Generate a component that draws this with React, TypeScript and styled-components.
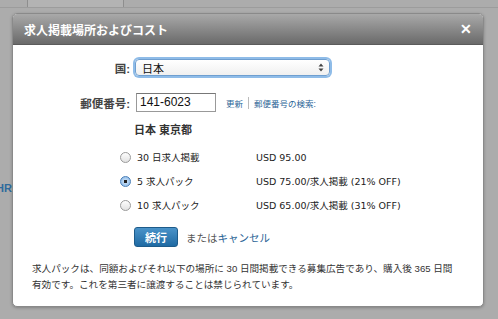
import React from 'react'
import styled, { createGlobalStyle } from 'styled-components'

const Global = createGlobalStyle`
  html, body { margin: 0; padding: 0; }
  * { box-sizing: border-box; }
  body {
    width: 498px;
    height: 319px;
    overflow: hidden;
    background: #acacac;
    font-family: "Liberation Sans", "Noto Sans CJK JP", sans-serif;
    color: #333;
  }
`

const Page = styled.div`
  position: relative;
  width: 498px;
  height: 319px;
  overflow: hidden;
`

const TabStrip = styled.div`
  height: 8px;
  border-bottom: 1px solid #9c9c9c;
  display: flex;
  padding-left: 27px;
`

const Tab = styled.div`
  width: 97px;
  height: 7px;
  border: 1px solid #8e8e8e;
  border-top: none;
  border-bottom: none;
  background: #b3b3b3;
`

const Behind = styled.div`
  position: absolute;
  left: 0;
  top: 182px;
  width: 12px;
  overflow: hidden;
  direction: rtl;
  font-size: 11px;
  font-weight: bold;
  color: #2e6a9c;
  line-height: 12px;
`

const Modal = styled.div`
  position: absolute;
  left: 12px;
  top: 13px;
  width: 472px;
  background: #fff;
  border: 1px solid #8a8a8a;
  border-radius: 5px;
  box-shadow: 0 1px 3px rgba(0, 0, 0, 0.25);
  overflow: hidden;
`

const Header = styled.div`
  height: 31px;
  background: linear-gradient(#a9a9a9, #6a6a6a);
  border-bottom: 1px solid #5b5b5b;
  display: flex;
  align-items: center;
  justify-content: space-between;
  padding: 0 11px 0 11px;
  color: #fff;
  font-weight: bold;
  font-size: 12px;
`

const Close = styled.span`
  font-size: 14px;
  line-height: 1;
`

const Body = styled.div`
  padding: 14px 18px 13px 18px;
`

const Row = styled.div<{ gap?: number }>`
  display: grid;
  grid-template-columns: 99px auto;
  column-gap: 5px;
  align-items: center;
  margin-bottom: ${p => p.gap ?? 0}px;
`

const Label = styled.label`
  text-align: right;
  font-size: 11.5px;
  font-weight: bold;
  color: #444;
`

const Select = styled.div`
  width: 195px;
  height: 17px;
  border: 1px solid #6f9fd0;
  border-radius: 4px;
  box-shadow: 0 0 0 2px #8fbce8;
  background: linear-gradient(#fff, #f0f0f0);
  display: flex;
  align-items: center;
  justify-content: space-between;
  padding: 0 5px 0 6px;
  font-size: 11px;
  color: #111;
`

const Postal = styled.div`
  display: flex;
  align-items: center;
`

const Input = styled.div`
  width: 80px;
  height: 19px;
  border: 1px solid #999;
  border-top-color: #777;
  padding-left: 3px;
  font-size: 12px;
  line-height: 17px;
  color: #111;
  margin-left: 1px;
`

const SmallLink = styled.a<{ offset?: number }>`
  font-size: 8.5px;
  color: #2a6496;
  text-decoration: none;
  margin-left: ${p => p.offset ?? 0}px;
`

const Sep = styled.span`
  width: 1px;
  height: 12px;
  background: #bbb;
  margin: 0 5px;
`

const Options = styled.div`
  margin-left: 89px;
  margin-top: 9px;
`

const Place = styled.div`
  font-size: 11px;
  font-weight: bold;
  color: #333;
  margin-left: 14px;
  margin-bottom: 8px;
`

const Option = styled.div`
  display: grid;
  grid-template-columns: 17px 119px auto;
  align-items: center;
  height: 24px;
  font-family: "DejaVu Sans", "Noto Sans CJK JP", sans-serif;
  font-size: 9.5px;
  color: #222;
`

const Radio = styled.span<{ checked?: boolean }>`
  width: 11px;
  height: 11px;
  border-radius: 50%;
  border: 1px solid ${p => (p.checked ? '#4a7fb8' : '#9a9a9a')};
  background: ${p => (p.checked ? 'radial-gradient(circle, #222 0 1.5px, #bcd8f4 2px, #7fb0e2 100%)' : 'linear-gradient(#fdfdfd, #e2e2e2)')};
`

const Actions = styled.div`
  display: flex;
  align-items: center;
  margin-top: 10px;
  margin-left: 103px;
  font-size: 10.5px;
  color: #555;
`

const Button = styled.button`
  width: 44px;
  height: 20px;
  border: 1px solid #1d5b8a;
  border-radius: 3px;
  background: linear-gradient(#4a93c9, #1f6aa3);
  color: #fff;
  font-weight: bold;
  font-size: 11px;
  font-family: inherit;
  margin-right: 8px;
  padding: 0;
`

const Cancel = styled.a`
  color: #2a6496;
  text-decoration: none;
`

const Note = styled.p`
  margin: 14px 0 0 1px;
  font-size: 9.6px;
  line-height: 16px;
  color: #333;
  white-space: nowrap;
`

const options = [
  { name: '30 日求人掲載', price: 'USD 95.00', checked: false },
  { name: '5 求人パック', price: 'USD 75.00/求人掲載 (21% OFF)', checked: true },
  { name: '10 求人パック', price: 'USD 65.00/求人掲載 (31% OFF)', checked: false },
]

export default function App() {
  return (
    <Page>
      <Global />
      <TabStrip>
        <Tab />
      </TabStrip>
      <Behind>HR</Behind>
      <Modal>
        <Header>
          <span>求人掲載場所およびコスト</span>
          <Close>✕</Close>
        </Header>
        <Body>
          <Row gap={17}>
            <Label>国:</Label>
            <Select>
              <span>日本</span>
              <svg width="6" height="9" viewBox="0 0 6 9">
                <path d="M3 0.5 L5.5 3.5 H0.5 Z M3 8.5 L5.5 5.5 H0.5 Z" fill="#444" />
              </svg>
            </Select>
          </Row>
          <Row>
            <Label>郵便番号:</Label>
            <Postal>
              <Input>141-6023</Input>
              <SmallLink offset={10}>更新</SmallLink>
              <Sep />
              <SmallLink>郵便番号の検索:</SmallLink>
            </Postal>
          </Row>
          <Options>
            <Place>日本 東京都</Place>
            {options.map(o => (
              <Option key={o.name}>
                <Radio checked={o.checked} />
                <span>{o.name}</span>
                <span>{o.price}</span>
              </Option>
            ))}
          </Options>
          <Actions>
            <Button>続行</Button>
            <span>または</span>
            <Cancel>キャンセル</Cancel>
          </Actions>
          <Note>
            求人パックは、同額およびそれ以下の場所に 30 日間掲載できる募集広告であり、購入後 365 日間
            <br />
            有効です。これを第三者に譲渡することは禁じられています。
          </Note>
        </Body>
      </Modal>
    </Page>
  )
}
